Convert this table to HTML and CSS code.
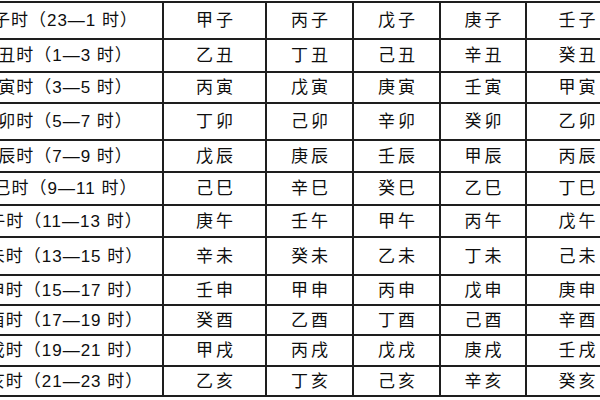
FILE: index.html
```html
<!DOCTYPE html>
<html lang="zh">
<head>
<meta charset="utf-8">
<link rel="stylesheet" href="styles.css">
</head>
<body>
<table class="ganzhi">
<colgroup>
<col class="c-hour"><col class="c-a"><col class="c-b"><col class="c-c"><col class="c-d"><col class="c-e">
</colgroup>
<tbody>
<tr><td>子时（23—1 时）</td><td>甲子</td><td>丙子</td><td>戊子</td><td>庚子</td><td>壬子</td></tr>
<tr><td>丑时（1—3 时）</td><td>乙丑</td><td>丁丑</td><td>己丑</td><td>辛丑</td><td>癸丑</td></tr>
<tr><td>寅时（3—5 时）</td><td>丙寅</td><td>戊寅</td><td>庚寅</td><td>壬寅</td><td>甲寅</td></tr>
<tr><td>卯时（5—7 时）</td><td>丁卯</td><td>己卯</td><td>辛卯</td><td>癸卯</td><td>乙卯</td></tr>
<tr><td>辰时（7—9 时）</td><td>戊辰</td><td>庚辰</td><td>壬辰</td><td>甲辰</td><td>丙辰</td></tr>
<tr><td>巳时（9—11 时）</td><td>己巳</td><td>辛巳</td><td>癸巳</td><td>乙巳</td><td>丁巳</td></tr>
<tr><td>午时（11—13 时）</td><td>庚午</td><td>壬午</td><td>甲午</td><td>丙午</td><td>戊午</td></tr>
<tr><td>未时（13—15 时）</td><td>辛未</td><td>癸未</td><td>乙未</td><td>丁未</td><td>己未</td></tr>
<tr><td>申时（15—17 时）</td><td>壬申</td><td>甲申</td><td>丙申</td><td>戊申</td><td>庚申</td></tr>
<tr><td>酉时（17—19 时）</td><td>癸酉</td><td>乙酉</td><td>丁酉</td><td>己酉</td><td>辛酉</td></tr>
<tr><td>戌时（19—21 时）</td><td>甲戌</td><td>丙戌</td><td>戊戌</td><td>庚戌</td><td>壬戌</td></tr>
<tr><td>亥时（21—23 时）</td><td>乙亥</td><td>丁亥</td><td>己亥</td><td>辛亥</td><td>癸亥</td></tr>
</tbody>
</table>
</body>
</html>
```
FILE: styles.css
```css
html, body {
  margin: 0;
  padding: 0;
  background: #ffffff;
  width: 600px;
  height: 400px;
  overflow: hidden;
}
.ganzhi {
  border-collapse: collapse;
  table-layout: fixed;
  width: 661px;
  margin: 1px 0 0 -34px;
  font-family: "Liberation Sans", "Noto Sans CJK SC", sans-serif;
  font-size: 17px;
  color: #0e0e0e;
}
.ganzhi td {
  border: 2px solid #1e1e1e;
  padding: 0 0 0 3px;
  text-align: center;
  vertical-align: middle;
  white-space: nowrap;
  letter-spacing: 3px;
  line-height: 1;
}
.ganzhi td:first-child {
  letter-spacing: 1px;
  padding-left: 1px;
}
.c-hour { width: 196px; }
.c-a { width: 103px; }
.c-b { width: 87px; }
.c-c { width: 87px; }
.c-d { width: 86px; }
.c-e { width: 102px; }
.ganzhi tr { height: 33px; }
.ganzhi tr:nth-child(1) { height: 37px; }
.ganzhi tr:nth-child(2) { height: 33px; }
.ganzhi tr:nth-child(3) { height: 31px; }
.ganzhi tr:nth-child(4) { height: 37px; }
.ganzhi tr:nth-child(5) { height: 32px; }
.ganzhi tr:nth-child(6) { height: 33px; }
.ganzhi tr:nth-child(7) { height: 32px; }
.ganzhi tr:nth-child(8) { height: 38px; }
.ganzhi tr:nth-child(9) { height: 30px; }
.ganzhi tr:nth-child(10) { height: 30px; }
.ganzhi tr:nth-child(11) { height: 31px; }
.ganzhi tr:nth-child(12) { height: 30px; }
```
